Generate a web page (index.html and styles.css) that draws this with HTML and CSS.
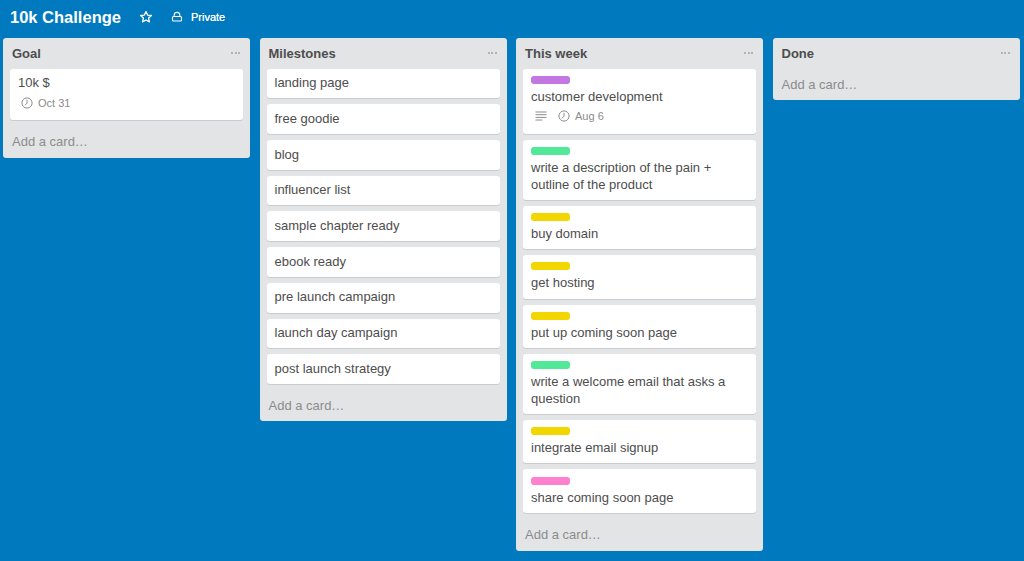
FILE: index.html
```html
<!DOCTYPE html>
<html lang="en">
<head>
<meta charset="utf-8">
<title>10k Challenge</title>
<link rel="stylesheet" href="styles.css">
</head>
<body>
<header class="board-header">
  <h1 class="board-title">10k Challenge</h1>
  <svg class="star" viewBox="0 0 14 14" width="14" height="14"><path d="M7 1.6l1.6 3.5 3.8.4-2.8 2.6.8 3.8L7 10l-3.4 1.9.8-3.8-2.8-2.6 3.8-.4z" fill="none" stroke="#fff" stroke-width="1.3" stroke-linejoin="round"/></svg>
  <svg class="lock" viewBox="0 0 12 12" width="12" height="12"><path d="M3.2 5.5V4.2a2.8 2.8 0 0 1 5.6 0v1.3" fill="none" stroke="#fff" stroke-width="1.1"/><rect x="1.5" y="5.5" width="9" height="4.5" rx="1" fill="none" stroke="#fff" stroke-width="1.1"/></svg>
  <span class="privacy">Private</span>
</header>
<main class="board">
  <section class="list">
    <div class="list-head"><h2>Goal</h2><span class="more"><i></i><i></i><i></i></span></div>
    <article class="card">
      <p>10k $</p>
      <div class="badges">
        <svg class="clock" viewBox="0 0 12 12" width="12" height="12"><circle cx="6" cy="6" r="5.1" fill="none" stroke="#8c8c8c" stroke-width="1"/><path d="M6 2.8v3.4L4 8.2" fill="none" stroke="#8c8c8c" stroke-width="1"/></svg>
        <span>Oct 31</span>
      </div>
    </article>
    <div class="add">Add a card…</div>
  </section>
  <section class="list">
    <div class="list-head"><h2>Milestones</h2><span class="more"><i></i><i></i><i></i></span></div>
    <article class="card"><p>landing page</p></article>
    <article class="card"><p>free goodie</p></article>
    <article class="card"><p>blog</p></article>
    <article class="card"><p>influencer list</p></article>
    <article class="card"><p>sample chapter ready</p></article>
    <article class="card"><p>ebook ready</p></article>
    <article class="card"><p>pre launch campaign</p></article>
    <article class="card"><p>launch day campaign</p></article>
    <article class="card"><p>post launch strategy</p></article>
    <div class="add">Add a card…</div>
  </section>
  <section class="list">
    <div class="list-head"><h2>This week</h2><span class="more"><i></i><i></i><i></i></span></div>
    <article class="card">
      <div class="label purple"></div>
      <p>customer development</p>
      <div class="badges">
        <svg class="desc" viewBox="0 0 12 12" width="12" height="12"><path d="M0.5 2h11M0.5 4.7h11M0.5 7.4h11M0.5 10h7" fill="none" stroke="#8c8c8c" stroke-width="1"/></svg>
        <svg class="clock" viewBox="0 0 12 12" width="12" height="12"><circle cx="6" cy="6" r="5.1" fill="none" stroke="#8c8c8c" stroke-width="1"/><path d="M6 2.8v3.4L4 8.2" fill="none" stroke="#8c8c8c" stroke-width="1"/></svg>
        <span>Aug 6</span>
      </div>
    </article>
    <article class="card"><div class="label green"></div><p>write a description of the pain + outline of the product</p></article>
    <article class="card"><div class="label yellow"></div><p>buy domain</p></article>
    <article class="card"><div class="label yellow"></div><p>get hosting</p></article>
    <article class="card"><div class="label yellow"></div><p>put up coming soon page</p></article>
    <article class="card"><div class="label green"></div><p>write a welcome email that asks a question</p></article>
    <article class="card"><div class="label yellow"></div><p>integrate email signup</p></article>
    <article class="card"><div class="label pink"></div><p>share coming soon page</p></article>
    <div class="add">Add a card…</div>
  </section>
  <section class="list">
    <div class="list-head"><h2>Done</h2><span class="more"><i></i><i></i><i></i></span></div>
    <div class="add">Add a card…</div>
  </section>
</main>
</body>
</html>
```
FILE: styles.css
```css
* { box-sizing: border-box; }
html, body { margin: 0; height: 100%; }
body {
  background: #0079bf;
  font-family: "Liberation Sans", Arial, sans-serif;
  overflow: hidden;
  color: #4d4d4d;
}
.board-header {
  display: flex;
  align-items: center;
  height: 38px;
  padding: 0 0 5px 10px;
  color: #fff;
}
.board-title {
  margin: 0;
  font-size: 16.5px;
  font-weight: 700;
  line-height: 20px;
}
.star { margin-left: 18px; }
.lock { margin-left: 18px; }
.privacy { margin-left: 8px; font-size: 11px; font-weight: 400; text-shadow: 0 0 .4px #fff; }
.board {
  display: flex;
  align-items: flex-start;
  gap: 9.5px;
  padding-left: 3px;
}
.list {
  flex: 0 0 247px;
  background: #e2e4e6;
  border-radius: 3px;
  padding: 0 7px;
}
.list-head {
  display: flex;
  justify-content: space-between;
  align-items: center;
  height: 30.7px;
  padding: 0 2px;
}
.list-head h2 {
  margin: 0;
  font-size: 13px;
  font-weight: 700;
  color: #4d4d4d;
}
.more { display: flex; gap: 1.5px; margin-right: 1px; }
.more i { width: 2px; height: 2px; border-radius: 50%; background: #a5a5a5; }
.card {
  background: #fff;
  border-radius: 3px;
  box-shadow: 0 1px 0 #ccc;
  padding: 6.55px 8px;
  margin-bottom: 6px;
}
.card p {
  margin: 0;
  font-size: 13px;
  line-height: 16.6px;
  color: #4d4d4d;
}
.label {
  width: 39px;
  height: 8px;
  border-radius: 3px;
  margin: .75px 0 5px;
}
.purple { background: #c377e0; }
.green { background: #51e898; }
.yellow { background: #f2d600; }
.pink { background: #ff80ce; }
.badges {
  display: flex;
  align-items: center;
  height: 21.55px;
  padding-left: 3px;
  font-size: 11px;
  color: #8c8c8c;
}
.badges span { margin-left: 5px; }
.desc { margin: 0 11px 0 1px; }
.add {
  height: 31.6px;
  display: flex;
  align-items: center;
  padding: 0 2px;
  font-size: 13px;
  color: #8c8c8c;
}
```
